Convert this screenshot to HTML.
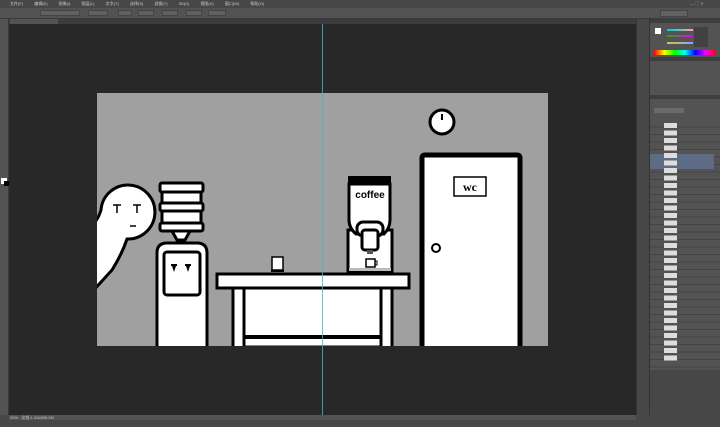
<!DOCTYPE html>
<html><head><meta charset="utf-8"><style>
*{margin:0;padding:0;box-sizing:border-box}
body{width:720px;height:427px;overflow:hidden;background:#282828;font-family:"Liberation Sans","Noto Sans CJK SC",sans-serif;position:relative}
.a{position:absolute}
.t{font-size:4px;color:#ccc;white-space:nowrap}
</style></head><body>
<div class="a" style="left:0;top:0;width:720px;height:8px;background:#474747"></div>
<div class="a t" style="left:10px;top:1px;font-size:4px;word-spacing:10px">文件(F) 编辑(E) 图像(I) 图层(L) 文字(Y) 选择(S) 滤镜(T) 3D(D) 视图(V) 窗口(W) 帮助(H)</div>
<div class="a" style="left:690px;top:1px;width:28px;height:6px;font-size:4px;color:#aaa">—  ▢  ✕</div>
<div class="a" style="left:0;top:8px;width:720px;height:11px;background:#535353;border-bottom:1px solid #3a3a3a"></div>
<div class="a" style="left:40px;top:10px;width:40px;height:6px;background:#616161;border:1px solid #444"></div>
<div class="a" style="left:88px;top:10px;width:20px;height:6px;background:#616161;border:1px solid #444"></div>
<div class="a" style="left:118px;top:10px;width:14px;height:6px;background:#616161;border:1px solid #444"></div>
<div class="a" style="left:138px;top:10px;width:16px;height:6px;background:#616161;border:1px solid #444"></div>
<div class="a" style="left:162px;top:10px;width:16px;height:6px;background:#616161;border:1px solid #444"></div>
<div class="a" style="left:186px;top:10px;width:16px;height:6px;background:#616161;border:1px solid #444"></div>
<div class="a" style="left:208px;top:10px;width:18px;height:6px;background:#616161;border:1px solid #444"></div>
<div class="a" style="left:660px;top:10px;width:28px;height:7px;background:#616161;border:1px solid #444"></div>
<div class="a" style="left:9px;top:19px;width:627px;height:5px;background:#3c3c3c"></div>
<div class="a" style="left:10px;top:19px;width:48px;height:5px;background:#535353"></div>
<div class="a" style="left:0;top:19px;width:9px;height:396px;background:#535353;border-right:1px solid #3a3a3a"></div>
<div class="a" style="left:1px;top:178px;width:6px;height:6px;background:#fff"></div>
<div class="a" style="left:4px;top:181px;width:5px;height:5px;background:#000"></div>
<div class="a" style="left:0;top:415px;width:720px;height:12px;background:#474747"></div>
<div class="a" style="left:9px;top:415px;width:627px;height:5px;background:#535353"></div>
<div class="a t" style="left:10px;top:415px">20% &nbsp; 文档:1.41M/59.2M</div>
<div class="a" style="left:636px;top:19px;width:14px;height:396px;background:#474747;border-left:1px solid #333;border-right:1px solid #333"></div>
<div class="a" style="left:650px;top:19px;width:70px;height:396px;background:#535353"></div>
<div class="a" style="left:650px;top:19px;width:70px;height:4px;background:#3e3e3e"></div>
<div class="a" style="left:655px;top:28px;width:6px;height:6px;background:#fff"></div>
<div class="a" style="left:667px;top:29px;width:26px;height:2px;background:linear-gradient(90deg,#0cc,#eaa)"></div>
<div class="a" style="left:667px;top:35px;width:26px;height:2px;background:linear-gradient(90deg,#2a2,#e0e)"></div>
<div class="a" style="left:667px;top:42px;width:26px;height:2px;background:linear-gradient(90deg,#cc3,#99f)"></div>
<div class="a" style="left:694px;top:27px;width:14px;height:20px;background:#414141"></div>
<div class="a" style="left:654px;top:50px;width:62px;height:5px;background:linear-gradient(90deg,#f00,#ff0,#0f0,#0ff,#00f,#f0f,#f00)"></div>
<div class="a" style="left:650px;top:57px;width:70px;height:4px;background:#3e3e3e"></div>
<div class="a" style="left:650px;top:95px;width:70px;height:4px;background:#3e3e3e"></div>
<div class="a" style="left:654px;top:108px;width:30px;height:5px;background:#6a6a6a"></div>
<div class="a" style="left:650px;top:120px;width:70px;height:250px;background:#535353;
background-image:repeating-linear-gradient(180deg,transparent 0 6.6px,#444 6.6px 7.5px)"></div>
<div class="a" style="left:650px;top:154px;width:64px;height:15px;background:#5d6b85"></div>
<div class="a" style="left:664px;top:123px;width:13px;height:240px;background:repeating-linear-gradient(180deg,#ddd 0 5px,transparent 5px 7.5px)"></div>
<div class="a" style="left:650px;top:370px;width:70px;height:45px;background:#474747"></div>

<svg class="a" style="left:0;top:0" width="720" height="427">
<rect x="97" y="93" width="451" height="253" fill="#a0a0a0"/>
<defs><clipPath id="c"><rect x="97" y="93" width="451" height="253"/></clipPath></defs>
<g clip-path="url(#c)" stroke="#000" stroke-width="3" fill="#fff">
<path d="M92 292 L112 270 Q122 254 127 239 A27 27 0 1 0 101 210 Q98 220 92 225 Z"/>
<g stroke-width="1.5" fill="none"><path d="M113 205h8M117 205v8M133 205h8M137 205v8M130 226h6"/></g>
<rect x="160" y="183" width="43" height="9" rx="2"/><rect x="162" y="192" width="39" height="11"/>
<rect x="160" y="203" width="43" height="8" rx="2"/><rect x="162" y="211" width="39" height="12"/>
<rect x="160" y="223" width="43" height="8" rx="2"/>
<path d="M172 231h18l-5 9h-8z"/>
<path d="M157 350V253q0-10 10-10h30q10 0 10 10v97z"/>
<rect x="164" y="252" width="36" height="43" rx="3"/>
<g fill="#000" stroke="none"><rect x="171" y="264" width="6" height="2"/><path d="M172 266h4l-2 6z"/><rect x="185" y="264" width="6" height="2"/><path d="M186 266h4l-2 6z"/></g>
<rect x="243" y="287" width="140" height="60"/>
<rect x="233" y="287" width="11" height="65"/><rect x="381" y="287" width="11" height="65"/>
<rect x="244" y="335" width="137" height="4" fill="#000" stroke="none"/>
<rect x="217" y="274" width="192" height="14"/>
<rect x="272" y="257" width="11" height="13" stroke-width="1.5"/>
<rect x="271" y="270" width="13" height="2" fill="#000" stroke="none"/>
<rect x="348" y="230" width="44" height="42"/>
<rect x="349" y="268" width="42" height="3" fill="#bbb" stroke="none"/>
<path d="M349 184h41v36q0 8-6 14h-28q-7-6-7-14z"/>
<rect x="348" y="176" width="43" height="9" fill="#000" stroke="none"/>
<rect x="357" y="222" width="26" height="14" rx="6"/>
<rect x="362" y="230" width="16" height="20" rx="3"/>
<rect x="367" y="250" width="6" height="4" fill="#555" stroke="none"/>
<rect x="366" y="259" width="9" height="8" stroke-width="1.5"/><path d="M375 261h2v4h-2" stroke-width="1" fill="none"/>
<circle cx="442" cy="122" r="12"/><path d="M442 114v6" stroke-width="2"/>
<path d="M422 350V158q0-3 3-3h92q3 0 3 3v192" stroke-width="5"/>
<rect x="454" y="177" width="32" height="19" stroke-width="1.5"/>
<circle cx="436" cy="248" r="4" stroke-width="2"/>
</g>
<text x="370" y="198" font-family="Liberation Sans,sans-serif" font-weight="bold" font-size="10" text-anchor="middle" fill="#000">coffee</text>
<text x="470" y="191" font-family="Liberation Serif,serif" font-weight="bold" font-size="12" text-anchor="middle" fill="#000">wc</text>
<line x1="322.5" y1="24" x2="322.5" y2="415" stroke="#6fa3b3" stroke-width="1" opacity="0.8"/>
</svg>
</body></html>
